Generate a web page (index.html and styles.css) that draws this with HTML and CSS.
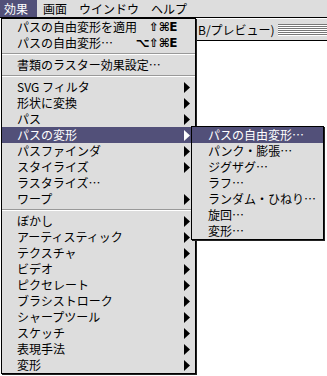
FILE: index.html
```html
<!DOCTYPE html>
<html lang="ja">
<head>
    <meta charset="UTF-8">
    <title>効果メニュー</title>
    <link rel="stylesheet" href="styles.css">
</head>
<body>

<div class="menubar">
    <span class="menubar-item active first">効果</span>
    <span class="menubar-item">画面</span>
    <span class="menubar-item">ウインドウ</span>
    <span class="menubar-item">ヘルプ</span>
</div>

<div class="window">
    <div class="titlebar">
        <span class="title">B/プレビュー)</span>
        <span class="stripes"></span>
    </div>
</div>

<div class="menu main-menu">
    <div class="item"><span>パスの自由変形を適用</span><span class="key">⇧⌘E</span></div>
    <div class="item"><span>パスの自由変形…</span><span class="key">⌥⇧⌘E</span></div>
    <div class="sep"></div>
    <div class="item"><span>書類のラスター効果設定…</span></div>
    <div class="sep"></div>
    <div class="item sub"><span>SVG フィルタ</span><svg class="arrow" width="6" height="11"><path d="M0 0L6 5.5L0 11Z"/></svg></div>
    <div class="item sub"><span>形状に変換</span><svg class="arrow" width="6" height="11"><path d="M0 0L6 5.5L0 11Z"/></svg></div>
    <div class="item sub"><span>パス</span><svg class="arrow" width="6" height="11"><path d="M0 0L6 5.5L0 11Z"/></svg></div>
    <div class="item sub selected"><span>パスの変形</span><svg class="arrow" width="6" height="11"><path d="M0 0L6 5.5L0 11Z"/></svg></div>
    <div class="item sub"><span>パスファインダ</span><svg class="arrow" width="6" height="11"><path d="M0 0L6 5.5L0 11Z"/></svg></div>
    <div class="item sub"><span>スタイライズ</span><svg class="arrow" width="6" height="11"><path d="M0 0L6 5.5L0 11Z"/></svg></div>
    <div class="item"><span>ラスタライズ…</span></div>
    <div class="item sub"><span>ワープ</span><svg class="arrow" width="6" height="11"><path d="M0 0L6 5.5L0 11Z"/></svg></div>
    <div class="sep"></div>
    <div class="item sub"><span>ぼかし</span><svg class="arrow" width="6" height="11"><path d="M0 0L6 5.5L0 11Z"/></svg></div>
    <div class="item sub"><span>アーティスティック</span><svg class="arrow" width="6" height="11"><path d="M0 0L6 5.5L0 11Z"/></svg></div>
    <div class="item sub"><span>テクスチャ</span><svg class="arrow" width="6" height="11"><path d="M0 0L6 5.5L0 11Z"/></svg></div>
    <div class="item sub"><span>ビデオ</span><svg class="arrow" width="6" height="11"><path d="M0 0L6 5.5L0 11Z"/></svg></div>
    <div class="item sub"><span>ピクセレート</span><svg class="arrow" width="6" height="11"><path d="M0 0L6 5.5L0 11Z"/></svg></div>
    <div class="item sub"><span>ブラシストローク</span><svg class="arrow" width="6" height="11"><path d="M0 0L6 5.5L0 11Z"/></svg></div>
    <div class="item sub"><span>シャープツール</span><svg class="arrow" width="6" height="11"><path d="M0 0L6 5.5L0 11Z"/></svg></div>
    <div class="item sub"><span>スケッチ</span><svg class="arrow" width="6" height="11"><path d="M0 0L6 5.5L0 11Z"/></svg></div>
    <div class="item sub"><span>表現手法</span><svg class="arrow" width="6" height="11"><path d="M0 0L6 5.5L0 11Z"/></svg></div>
    <div class="item sub"><span>変形</span><svg class="arrow" width="6" height="11"><path d="M0 0L6 5.5L0 11Z"/></svg></div>
</div>

<div class="menu sub-menu">
    <div class="item selected"><span>パスの自由変形…</span></div>
    <div class="item"><span>パンク・膨張…</span></div>
    <div class="item"><span>ジグザグ…</span></div>
    <div class="item"><span>ラフ…</span></div>
    <div class="item"><span>ランダム・ひねり…</span></div>
    <div class="item"><span>旋回…</span></div>
    <div class="item"><span>変形…</span></div>
</div>

</body>
</html>
```

FILE: styles.css
```css
body {
    margin: 0;
    padding: 0;
    background-color: #fff;
    color: #000;
    font-family: "Noto Sans CJK JP", "DejaVu Sans", sans-serif;
    font-size: 12px;
    line-height: 16px;
}
.menubar {
    display: flex;
    height: 17px;
    line-height: 17px;
    background-color: #dddddd;
    border-bottom: 1px solid #000;
}
.menubar-item {
    padding: 0 6px;
}
.menubar-item.first {
    padding: 0 9px 0 4px;
}
.menubar-item.active {
    background-color: #525079;
    color: #fff;
}
.window {
    margin-left: 196px;
    margin-top: 1px;
}
.titlebar {
    display: flex;
    align-items: center;
    height: 21px;
    background-color: #dddddd;
    border-bottom: 1px solid #000;
}
.title {
    padding-left: 2px;
    white-space: nowrap;
}
.stripes {
    flex: 1;
    height: 12px;
    margin-left: 3px;
    background: repeating-linear-gradient(to bottom, #777 0 1px, #fff 1px 2px);
}
.menu {
    position: absolute;
    background-color: #dddddd;
    border: 1px solid #000;
    box-shadow: 1px 1px 0 #222;
}
.main-menu {
    top: 18px;
    left: 1px;
    width: 193px;
}
.sub-menu {
    top: 126px;
    left: 191px;
    width: 131px;
}
.item {
    display: flex;
    justify-content: space-between;
    align-items: center;
    height: 16px;
    padding: 0 18px 0 15px;
    white-space: nowrap;
}
.main-menu .item.sub {
    padding-right: 5px;
}
.sub-menu .item {
    padding-left: 16px;
}
.item.selected {
    background-color: #525079;
    color: #fff;
}
.key {
    font-family: "DejaVu Sans", sans-serif;
    font-size: 12px;
    font-weight: bold;
    letter-spacing: -0.5px;
}
.arrow {
    fill: currentColor;
}
.sep {
    margin: 2px 0;
    border-top: 1px solid #999;
    border-bottom: 1px solid #fff;
}
```
